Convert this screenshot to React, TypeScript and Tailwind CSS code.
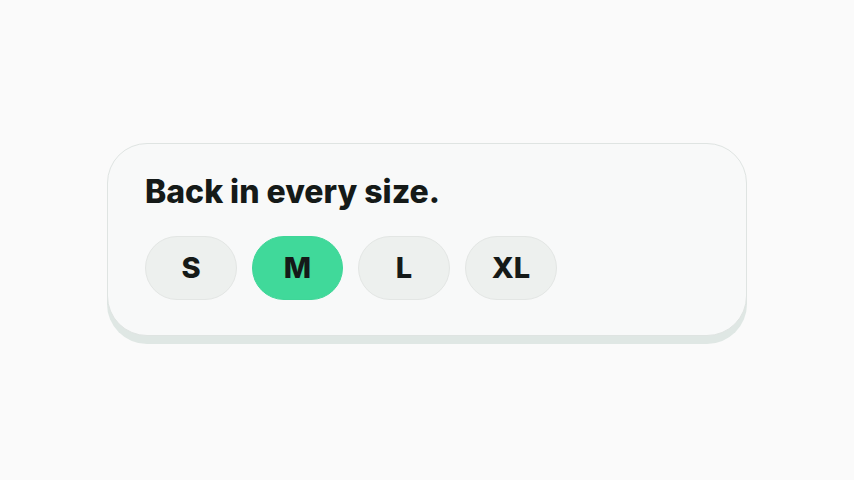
const sizes = ["S", "M", "L", "XL"];

export default function App() {
  const selected = "M";
  return (
    <div className="min-h-screen w-full bg-[#fafafa] flex items-start justify-center pt-[143px] font-['Inter','Liberation_Sans',sans-serif]">
      <div className="w-[640px] rounded-[40px] border border-[#dfe4e2] bg-[#f8f9f9] shadow-[0_8px_0_0_#dfe7e4] px-[37px] pt-[29px] pb-[35px]">
        <h1 className="text-[32px] leading-[38px] font-extrabold text-[#151a18]">
          Back in every size.
        </h1>
        <div className="mt-[25px] flex gap-[15px]">
          {sizes.map((s) => (
            <button
              key={s}
              className={
                s === selected
                  ? "w-[91px] h-[64px] rounded-full border border-[#3fd698] bg-[#40d99a] text-[29px] font-extrabold text-[#151a18]"
                  : "w-[92px] h-[64px] rounded-full border border-[#e3e6e4] bg-[#edf0ee] text-[29px] font-extrabold text-[#151a18]"
              }
            >
              {s}
            </button>
          ))}
        </div>
      </div>
    </div>
  );
}
